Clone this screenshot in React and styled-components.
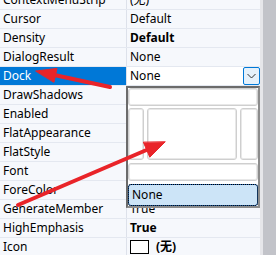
import styled, { createGlobalStyle } from "styled-components";

const GlobalStyle = createGlobalStyle`
  html, body {
    margin: 0;
    padding: 0;
    background: #f6f8fc;
  }
  body {
    font-family: "Noto Sans", "Noto Sans CJK SC", sans-serif;
    font-size: 12px;
    color: #000;
  }
`;

const Frame = styled.div`
  position: relative;
  display: flex;
  width: 276px;
  height: 255px;
  overflow: hidden;
`;

const Grid = styled.div`
  width: 260px;
  flex: none;
  background: #f6f8fc;
`;

const Rows = styled.div`
  margin-top: -9px;
`;

const Row = styled.div`
  display: grid;
  grid-template-columns: 127px 1fr;
  height: 19px;
  box-sizing: border-box;
  border-bottom: 1px solid #e4e8f0;
`;

const Label = styled.div`
  padding-left: 3px;
  line-height: 18px;
  white-space: nowrap;
  overflow: hidden;
  border-right: 1px solid #dde1ea;
  background: ${(p) => (p.$selected ? "#0078d7" : "transparent")};
  color: ${(p) => (p.$selected ? "#fff" : "#000")};
`;

const Value = styled.div`
  position: relative;
  display: flex;
  align-items: center;
  padding-left: 3px;
  line-height: 18px;
  white-space: nowrap;
  font-weight: ${(p) => (p.$bold ? 700 : 400)};
  background: ${(p) => (p.$editing ? "#fff" : "transparent")};
`;

const DropButton = styled.div`
  margin-left: auto;
  width: 17px;
  height: 18px;
  box-sizing: border-box;
  display: flex;
  align-items: center;
  justify-content: center;
  border: 1px solid #0078d7;
  border-radius: 2px;
  background: #e5f1fb;
`;

const Swatch = styled.span`
  width: 19px;
  height: 14px;
  box-sizing: border-box;
  border: 1px solid #000;
  background: #fff;
  margin-right: 7px;
`;

const Dropdown = styled.div`
  position: absolute;
  z-index: 2;
  top: 19px;
  left: -1px;
  width: 134px;
  height: 122px;
  box-sizing: border-box;
  display: flex;
  flex-direction: column;
  border-style: solid;
  border-width: 2px;
  border-color: #6b6b6b #8c8c8c #8c8c8c #6b6b6b;
  background: #fff;
  font-weight: 400;
`;

const DockButton = styled.div`
  box-sizing: border-box;
  height: ${(p) => p.$h}px;
  width: ${(p) => (p.$w ? `${p.$w}px` : "auto")};
  margin-top: ${(p) => p.$mt || 0}px;
  border: 1px solid #cfcfcf;
  box-shadow: inset 0 0 0 1px #e8e8e8;
  border-radius: 3px;
  background: #fff;
`;

const MiddleRow = styled.div`
  display: flex;
  gap: 3px;
  height: 52px;
  margin-top: 2px;
`;

const NoneItem = styled.div`
  box-sizing: border-box;
  height: 22px;
  margin-top: 3px;
  padding-left: 3px;
  line-height: 20px;
  border: 1px solid #2468b4;
  outline: 1px dotted #000;
  outline-offset: -1px;
  border-radius: 3px;
  background: #cce4f7;
`;

const Scrollbar = styled.div`
  flex: 1;
  padding-left: 3px;
  background: #e6e6ea;
`;

const Thumb = styled.div`
  height: 100%;
  background: #c2c3c9;
`;

const Annotations = styled.svg`
  position: absolute;
  z-index: 3;
  left: 0;
  top: 0;
  pointer-events: none;
`;

const properties = [
  { name: "ContextMenuStrip", value: "(无)" },
  { name: "Cursor", value: "Default" },
  { name: "Density", value: "Default", bold: true },
  { name: "DialogResult", value: "None" },
  { name: "Dock", value: "None", selected: true },
  { name: "DrawShadows", value: "True" },
  { name: "Enabled", value: "True" },
  { name: "FlatAppearance", value: "" },
  { name: "FlatStyle", value: "Standard" },
  { name: "Font", value: "Microsoft YaHei UI, 9pt" },
  { name: "ForeColor", value: "ControlText" },
  { name: "GenerateMember", value: "True" },
  { name: "HighEmphasis", value: "True", bold: true },
  { name: "Icon", value: "(无)", bold: true, swatch: true },
];

function DockEditor() {
  return (
    <Dropdown>
      <DockButton $h={18} />
      <MiddleRow>
        <DockButton $h={52} $w={16} />
        <DockButton $h={52} $w={90} />
        <DockButton $h={52} $w={18} />
      </MiddleRow>
      <DockButton $h={18} $mt={3} />
      <NoneItem>None</NoneItem>
    </Dropdown>
  );
}

export default function App() {
  return (
    <Frame>
      <GlobalStyle />
      <Grid>
        <Rows>
          {properties.map((p) => (
            <Row key={p.name}>
              <Label $selected={p.selected}>{p.name}</Label>
              <Value $bold={p.bold} $editing={p.selected}>
                {p.swatch && <Swatch />}
                {p.value}
                {p.selected && (
                  <>
                    <DropButton>
                      <svg width="9" height="6" viewBox="0 0 9 6">
                        <path d="M0.5 1 L4.5 5 L8.5 1" fill="none" stroke="#333" strokeWidth="1" />
                      </svg>
                    </DropButton>
                    <DockEditor />
                  </>
                )}
              </Value>
            </Row>
          ))}
        </Rows>
      </Grid>
      <Scrollbar>
        <Thumb />
      </Scrollbar>
      <Annotations width="276" height="255" viewBox="0 0 276 255">
        <g fill="#e92429" stroke="#e92429" strokeLinecap="round">
          <line x1="110" y1="87" x2="52" y2="74.5" strokeWidth="4" />
          <polygon points="36,71 57,68.4 54,82" strokeWidth="1" />
          <line x1="18" y1="205" x2="150" y2="148.5" strokeWidth="4" />
          <polygon points="165,142 149.8,157.2 143.5,142.5" strokeWidth="1" />
        </g>
      </Annotations>
    </Frame>
  );
}
